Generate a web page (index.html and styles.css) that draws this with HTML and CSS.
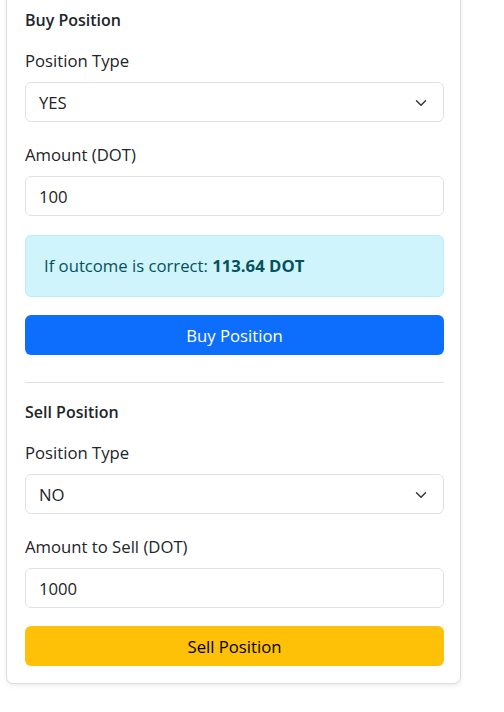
FILE: index.html
```html
<!DOCTYPE html>
<html lang="en">
<head>
<meta charset="utf-8">
<title>Positions</title>
<link rel="stylesheet" href="styles.css">
</head>
<body>
<div class="card">
  <div class="card-body">
    <h6 class="section-title">Buy Position</h6>
    <div class="group">
      <label class="form-label">Position Type</label>
      <div class="select">
        <span>YES</span>
        <svg class="chev" viewBox="0 0 16 16" width="16" height="12"><path d="M2 5l6 6 6-6" fill="none" stroke="#343a40" stroke-width="2" stroke-linecap="round" stroke-linejoin="round"/></svg>
      </div>
    </div>
    <div class="group group-last">
      <label class="form-label">Amount (DOT)</label>
      <div class="input">100</div>
    </div>
    <div class="alert">If outcome is correct: <strong>113.64 DOT</strong></div>
    <button class="btn btn-primary">Buy Position</button>
    <hr class="divider">
    <h6 class="section-title">Sell Position</h6>
    <div class="group">
      <label class="form-label">Position Type</label>
      <div class="select">
        <span>NO</span>
        <svg class="chev" viewBox="0 0 16 16" width="16" height="12"><path d="M2 5l6 6 6-6" fill="none" stroke="#343a40" stroke-width="2" stroke-linecap="round" stroke-linejoin="round"/></svg>
      </div>
    </div>
    <div class="group group-sell">
      <label class="form-label">Amount to Sell (DOT)</label>
      <div class="input">1000</div>
    </div>
    <button class="btn btn-warning">Sell Position</button>
  </div>
</div>
</body>
</html>
```
FILE: styles.css
```css
* { box-sizing: border-box; }
html, body { margin: 0; padding: 0; background: #fff; }
body {
  font-family: "Open Sans", "Noto Sans", sans-serif;
  font-size: 16.7px;
  line-height: 24px;
  color: #212529;
  overflow: hidden;
  height: 712px;
}
.card {
  margin: -10px 0 0 6px;
  width: 455px;
  border: 1px solid #dcdcdc;
  border-radius: 7px;
  background: #fff;
  box-shadow: 0 2px 4px rgba(0,0,0,.075);
}
.card-body {
  padding: 17px 16px 17px 18px;
}
.section-title {
  margin: 0 0 17px;
  font-size: 16px;
  line-height: 24px;
  font-weight: 600;
}
.form-label {
  display: block;
  margin-bottom: 9px;
}
.group { margin-bottom: 21px; }
.group-last { margin-bottom: 19px; }
.group-sell { margin-bottom: 18px; }
.select, .input {
  height: 40px;
  border: 1px solid #dee2e6;
  border-radius: 6px;
  padding: 8px 12px 6px 13px;
  display: flex;
  align-items: center;
  justify-content: space-between;
  background: #fff;
}
.chev { margin-right: 2px; margin-top: -1px; }
.alert {
  height: 62px;
  padding: 18px 18px;
  background: #cff4fc;
  border: 1px solid #b6effb;
  border-radius: 6px;
  color: #055160;
  margin-bottom: 18px;
}
.alert strong { font-weight: 700; }
.btn {
  display: block;
  width: 100%;
  height: 40px;
  border: 0;
  border-radius: 6px;
  font-family: inherit;
  font-size: 16.7px;
  line-height: 24px;
  padding: 2px 0 0;
  text-align: center;
}
.btn-primary { background: #0d6efd; color: #fff; }
.btn-warning { background: #ffc107; color: #000; }
.divider {
  margin: 27px 0 17px;
  border: 0;
  border-top: 1px solid #dee2e6;
  height: 0;
}
```
